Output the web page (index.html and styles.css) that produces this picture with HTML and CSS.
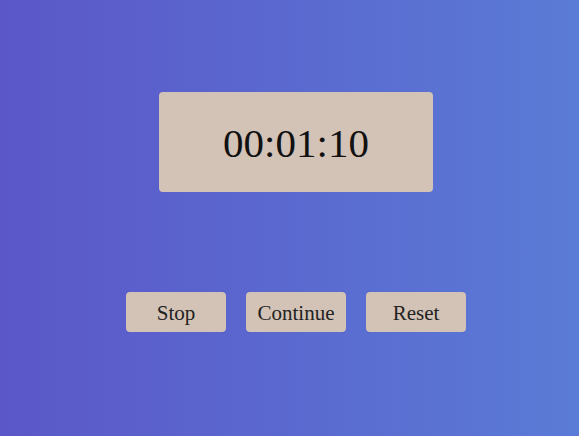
FILE: index.html
```html
<!DOCTYPE html>
<html>
<head>
<meta charset="utf-8">
<link rel="stylesheet" href="styles.css">
</head>
<body>
<main class="app">
  <div class="display">00:01:10</div>
  <div class="controls">
    <button class="btn">Stop</button>
    <button class="btn">Continue</button>
    <button class="btn">Reset</button>
  </div>
</main>
</body>
</html>
```
FILE: styles.css
```css
html, body {
  margin: 0;
  height: 100%;
}
body {
  background: linear-gradient(90deg, #5b57c8 0%, #5a7bd6 100%);
  font-family: "Liberation Serif", serif;
}
.app {
  display: flex;
  flex-direction: column;
  align-items: center;
  padding-top: 92px;
  padding-left: 13px;
}
.display {
  width: 274px;
  height: 100px;
  background: #d3c3b6;
  border-radius: 4px;
  display: flex;
  align-items: center;
  justify-content: center;
  font-size: 41px;
  color: #111;
  padding-top: 1px;
  box-sizing: border-box;
}
.controls {
  display: flex;
  gap: 20px;
  margin-top: 100px;
}
.btn {
  width: 100px;
  height: 40px;
  border: none;
  border-radius: 4px;
  background: #d3c3b6;
  font-family: "Liberation Serif", serif;
  font-size: 21px;
  color: #222;
  padding: 2px 0 0;
}
```
